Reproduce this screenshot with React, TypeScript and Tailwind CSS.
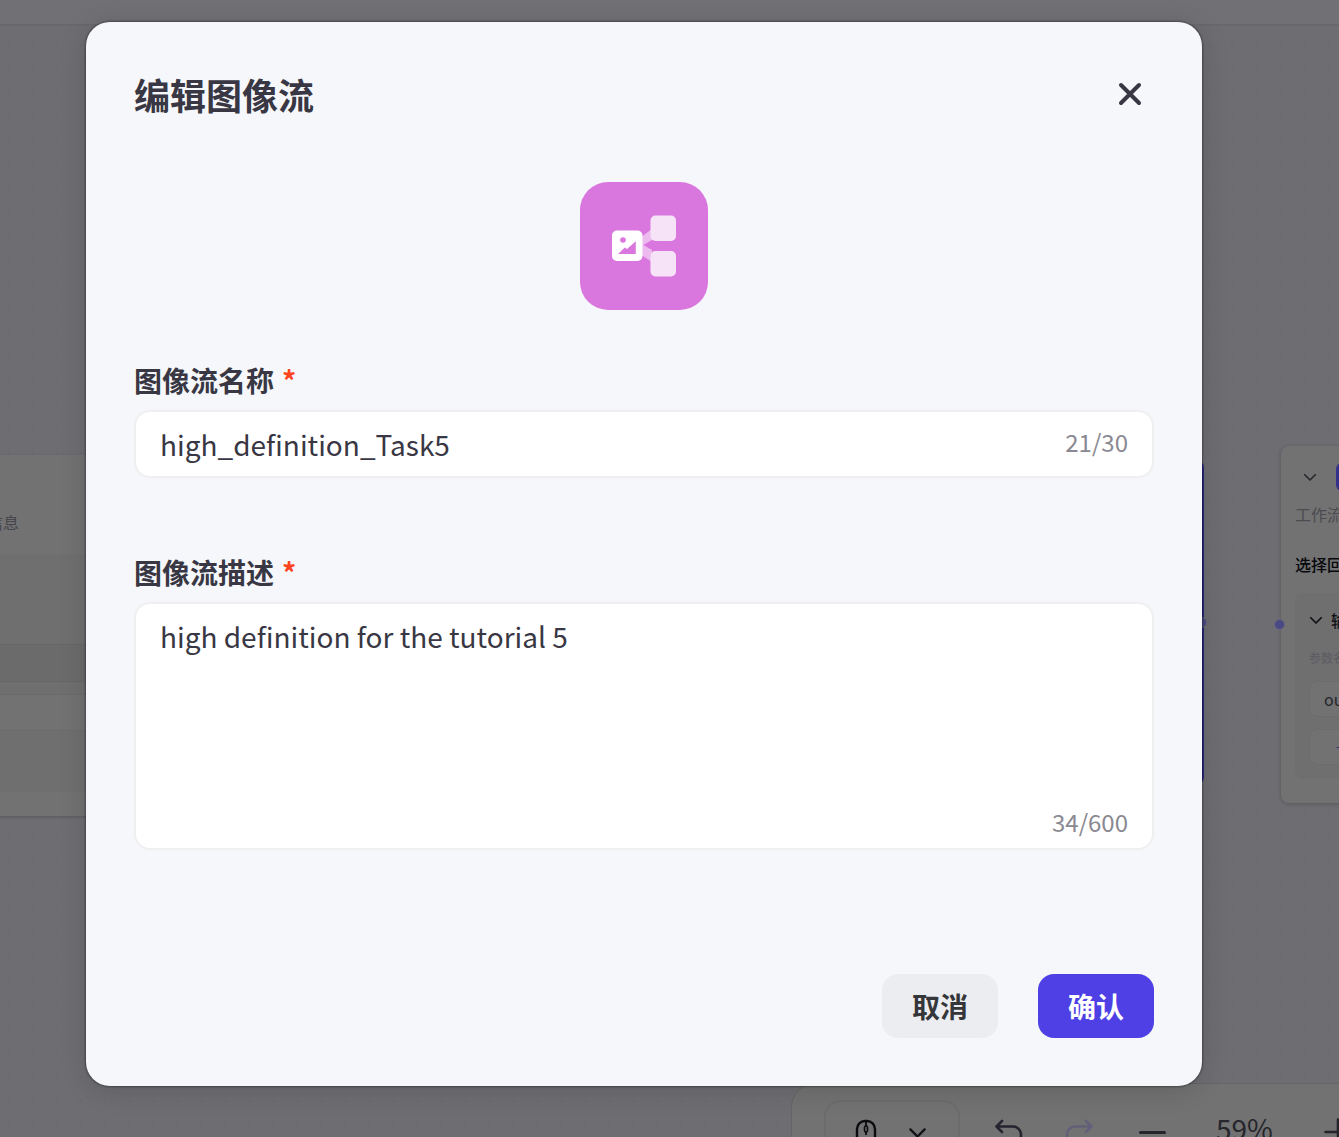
import React, { useState } from "react";

function Chevron({ className }: { className: string }) {
  return (
    <svg viewBox="0 0 16 10" fill="none" stroke="currentColor" strokeWidth="2" strokeLinecap="round" strokeLinejoin="round" className={className} aria-hidden="true">
      <path d="M2 2l6 6 6-6" />
    </svg>
  );
}

function StartNode() {
  return (
    <section className="absolute top-[455px] -left-[60px] w-[400px] bg-[#727273] pb-6 shadow-[0_1px_3px_rgba(0,0,0,0.2)]">
      <p className="h-[99px] pt-[55px] pl-[47px] text-base leading-6 text-[#46464d]">信息</p>
      <div className="bg-[#6f6f70]">
        <div className="h-[90px]" />
        <div className="h-[38px] border-y border-[#676768] bg-[#6b6b6c]" />
        <div className="h-3" />
        <div className="h-[37px] border-y border-[#6b6b6c] bg-[#727273]" />
        <div className="h-[61px]" />
      </div>
    </section>
  );
}

function EndNode() {
  return (
    <section className="absolute top-[446px] left-[1281px] w-[400px] rounded-lg bg-[#727273] px-3.5 pb-6 whitespace-nowrap shadow-[0_1px_4px_rgba(0,0,0,0.2)]">
      <div className="flex h-14 items-center gap-[19px] pt-1.5 pl-2">
        <Chevron className="w-3.5 text-[#2a2a2e]" />
        <span className="size-7 rounded-md bg-[#34318a]" />
      </div>
      <p className="text-base leading-6 text-[#4b4b50]">工作流运行结束</p>
      <h2 className="mt-[26px] text-base leading-6 font-medium text-[#08080c]">选择回答模式</h2>
      <div className="mt-[17px] rounded-lg bg-[#6f6f70] px-3.5 pb-3.5">
        <div className="flex h-[54px] items-center gap-2 text-[#111115]">
          <Chevron className="w-3.5" />
          <span className="text-base font-medium">输出变量</span>
        </div>
        <p className="h-[34px] text-xs leading-[22px] text-[#5b5b60]">参数名</p>
        <div className="h-9 rounded-lg border border-[#6c6c6d] bg-[#727273] pl-3.5 text-base leading-[34px] text-[#26262b]">output</div>
        <div className="mt-3 h-9 rounded-lg border border-[#6c6c6d] bg-[#727273] pl-[26px] leading-8 text-[#2f2b7a]">+</div>
      </div>
      <span className="absolute top-[173px] -left-[7px] size-[11px] rounded-full border border-[#68687e] bg-[#4b4983]" />
    </section>
  );
}

function Toolbar() {
  return (
    <div className="absolute top-[1083px] left-[791px] flex w-[640px] rounded-3xl border border-[#656567] bg-[#727273] px-8 pt-4 pb-4">
      <div className="flex h-16 w-[136px] shrink-0 rounded-2xl border-2 border-[#6c6c6d] pt-4 pl-[29px]">
        <svg viewBox="0 0 22 32" fill="none" stroke="#0c0c10" strokeWidth="2.4" className="h-8 w-[22px]" aria-hidden="true">
          <path d="M2 11a8 8 0 0 1 8-8h2a8 8 0 0 1 8 8v10a8 8 0 0 1-8 8h-2a8 8 0 0 1-8-8z" />
          <path d="M11 3v5" strokeWidth="1.8" />
          <rect x="9.5" y="8" width="3" height="6" rx="1.5" strokeWidth="1.6" />
          <path d="M11 14v3" strokeWidth="1.8" />
        </svg>
        <Chevron className="mt-[9px] ml-[31px] h-3 w-[19px] text-[#141418]" />
      </div>
      <svg viewBox="0 0 28 28" fill="none" stroke="#26242f" strokeWidth="2.6" strokeLinecap="round" strokeLinejoin="round" className="mt-[18px] ml-[35px] size-7 shrink-0" aria-hidden="true">
        <path d="M7 3L1.500 8.500 7 14M2 8.500H18a8 8 0 0 1 8 8v1a8 8 0 0 1-8 8h-5" />
      </svg>
      <svg viewBox="0 0 28 28" fill="none" stroke="#626079" strokeWidth="2.6" strokeLinecap="round" strokeLinejoin="round" className="mt-[18px] ml-[42px] size-7 shrink-0" aria-hidden="true">
        <path d="M21 3l5.500 5.500L21 14M26 8.500H10a8 8 0 0 0-8 8v1a8 8 0 0 0 8 8h5" />
      </svg>
      <span className="mt-[31px] ml-[46px] h-[3px] w-[27px] shrink-0 rounded-full bg-[#26242b]" />
      <span className="mt-2 ml-[50px] text-[28px] leading-10 text-[#26262c]">59%</span>
      <svg viewBox="0 0 28 28" stroke="#26242b" strokeWidth="2.6" strokeLinecap="round" className="mt-[18px] ml-[51px] size-7 shrink-0" aria-hidden="true">
        <path d="M1.500 14h25M14 1.500v25" />
      </svg>
    </div>
  );
}

function Canvas() {
  return (
    <div className="absolute inset-0 overflow-hidden bg-[#6e6d72]" aria-hidden="true">
      <div className="h-[26px] border-b-2 border-[#69686d] bg-[#717074]" />
      <div className="h-full bg-[radial-gradient(circle,#6b6a6f_1px,transparent_2px)] bg-[length:24px_24px] bg-[position:-3px_7px]" />
      <StartNode />
      <div className="absolute top-[460px] left-[800px] h-[325px] w-[404px] rounded-lg border-2 border-[#2b2883] bg-[#727273]">
        <span className="absolute top-[155px] -right-[5px] size-[11px] rounded-full border border-[#68687e] bg-[#4b4983]" />
      </div>
      <EndNode />
      <Toolbar />
    </div>
  );
}

function FlowIcon() {
  return (
    <svg viewBox="0 0 128 128" className="size-32 rounded-[28px] bg-[#da77df]" role="img" aria-label="图像流">
      <path d="M60 56L72 47v11L60 65zM60 61l12 7v12L60 72z" fill="#ecbaef" />
      <rect x="70.500" y="33.500" width="25.500" height="25.500" rx="5" fill="#f6e3f8" />
      <rect x="70.500" y="69" width="25.500" height="25.500" rx="5" fill="#f6e3f8" />
      <rect x="32" y="48.500" width="30.500" height="30.500" rx="5" fill="#fff" />
      <circle cx="43" cy="58" r="2.800" fill="#da77df" />
      <path d="M38 72l6.800-6.600 2.200 1.600L55.800 59.200V72z" fill="#da77df" />
    </svg>
  );
}

function Label({ htmlFor, children }: { htmlFor: string; children: React.ReactNode }) {
  return (
    <label htmlFor={htmlFor} className="flex gap-2 text-[28px] leading-7 font-semibold">
      {children}
      <span className="text-[#ff441e]">*</span>
    </label>
  );
}

export default function App() {
  const [name, setName] = useState("high_definition_Task5");
  const [description, setDescription] = useState("high definition for the tutorial 5");
  return (
    <div className="relative h-screen overflow-hidden font-['Noto_Sans_CJK_SC',sans-serif]">
      <Canvas />
      <div className="relative pt-[22px] pr-[137px] pl-[86px]">
        <form
          role="dialog"
          aria-labelledby="dialog-title"
          onSubmit={(e) => e.preventDefault()}
          className="rounded-3xl bg-[#f6f7fb] p-12 text-[#383743] shadow-[0_0_2px_1px_rgba(0,0,0,0.35),0_4px_28px_rgba(0,0,0,0.14)]"
        >
          <header className="flex h-12 items-center justify-between">
            <h1 id="dialog-title" className="text-4xl font-semibold">编辑图像流</h1>
            <button type="button" aria-label="关闭" className="flex size-12 items-center justify-center">
              <svg viewBox="0 0 24 24" fill="none" stroke="currentColor" strokeWidth="4" strokeLinecap="round" className="size-6" aria-hidden="true">
                <path d="M3 3l18 18M21 3L3 21" />
              </svg>
            </button>
          </header>
          <div className="mt-16 flex justify-center">
            <FlowIcon />
          </div>
          <div className="mt-14">
            <Label htmlFor="flow-name">图像流名称</Label>
            <div className="mt-4 flex h-[68px] items-center rounded-2xl border-2 border-[#efeff0] bg-white px-6">
              <input
                id="flow-name"
                value={name}
                maxLength={30}
                onChange={(e) => setName(e.target.value)}
                className="h-full min-w-0 flex-1 text-[28px] outline-none"
              />
              <span className="pb-1 text-2xl text-[#8a8991]">{name.length}/30</span>
            </div>
          </div>
          <div className="mt-20">
            <Label htmlFor="flow-description">图像流描述</Label>
            <div className="mt-4 flex h-[248px] flex-col rounded-2xl border-2 border-[#efeff0] bg-white px-6 pt-2.5 pb-2.5">
              <textarea
                id="flow-description"
                value={description}
                maxLength={600}
                onChange={(e) => setDescription(e.target.value)}
                className="flex-1 resize-none text-[28px] leading-[44px] outline-none"
              />
              <span className="text-right text-2xl text-[#8a8991]">{description.length}/600</span>
            </div>
          </div>
          <footer className="mt-[124px] flex justify-end gap-10">
            <button type="button" className="h-16 rounded-2xl bg-[#ecedf0] px-[30px] text-[28px] font-semibold text-[#35363a]">取消</button>
            <button type="submit" className="h-16 rounded-2xl bg-[#4e40e5] px-[30px] text-[28px] font-semibold text-white">确认</button>
          </footer>
        </form>
      </div>
    </div>
  );
}
